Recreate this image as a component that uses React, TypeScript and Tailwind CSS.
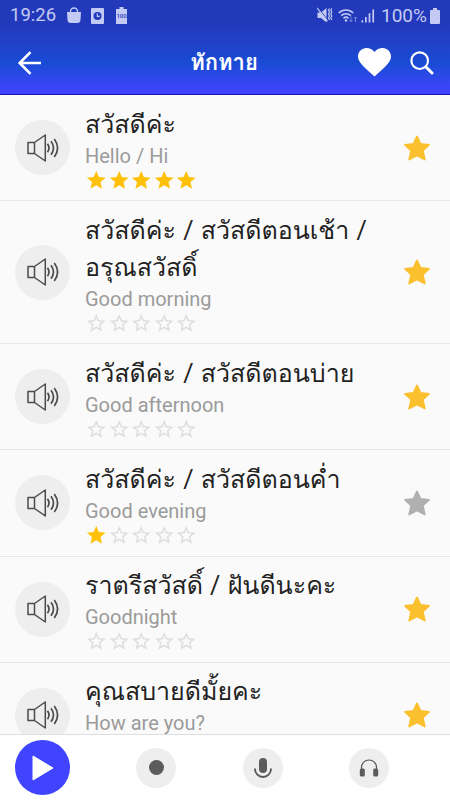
import React from "react";

type Phrase = {
  thai: string[];
  english: string;
  rating: number;
  favorite: boolean;
};

const phrases: Phrase[] = [
  { thai: ["สวัสดีค่ะ"], english: "Hello / Hi", rating: 5, favorite: true },
  {
    thai: ["สวัสดีค่ะ / สวัสดีตอนเช้า /", "อรุณสวัสดิ์"],
    english: "Good morning",
    rating: 0,
    favorite: true,
  },
  {
    thai: ["สวัสดีค่ะ / สวัสดีตอนบ่าย"],
    english: "Good afternoon",
    rating: 0,
    favorite: true,
  },
  {
    thai: ["สวัสดีค่ะ / สวัสดีตอนค่ำ"],
    english: "Good evening",
    rating: 1,
    favorite: false,
  },
  {
    thai: ["ราตรีสวัสดิ์ / ฝันดีนะคะ"],
    english: "Goodnight",
    rating: 0,
    favorite: true,
  },
  {
    thai: ["คุณสบายดีมั้ยคะ"],
    english: "How are you?",
    rating: 0,
    favorite: true,
  },
];

const StatusBar: React.FC = () => (
  <div className="flex h-[31px] items-center justify-between pl-[10px] pr-[10px] text-[#c3caf3]">
    <div className="flex items-center">
      <span className="w-[57px] text-[18.5px] leading-[31px]">19:26</span>
      <svg width="14" height="17" viewBox="0 0 14 17" fill="currentColor">
        <path d="M0 5h14l-.5 8a3.200 3.200 0 0 1-3.200 3H3.700a3.200 3.200 0 0 1-3.200-3z" />
        <path
          d="M3.500 8V4.500a3.500 3.500 0 0 1 7 0V8"
          fill="none"
          stroke="currentColor"
          strokeWidth="1.400"
        />
      </svg>
      <svg className="ml-[10px]" width="13" height="16" viewBox="0 0 13 16">
        <rect width="13" height="16" rx="1" fill="currentColor" />
        <circle cx="6.500" cy="8" r="4" fill="#2339bd" />
        <path d="M6.300 5.500V8.300h2.500" fill="none" stroke="currentColor" strokeWidth="1.200" />
      </svg>
      <svg className="ml-[12px]" width="11" height="17" viewBox="0 0 11 17">
        <path d="M3.500 0h4v2H11v15H0V2h3.500z" fill="currentColor" />
        <text x="5.500" y="11" fontSize="6" fontWeight="500" textAnchor="middle" fill="#2339bd">
          100
        </text>
      </svg>
    </div>
    <div className="flex items-center">
      <svg width="16" height="17" viewBox="0 0 16 17" fill="none" stroke="currentColor">
        <path d="M.5 5.500h3.500L9.500 1v14.500L4 11H.5z" fill="currentColor" stroke="none" />
        <path d="M1 .4l10 13" stroke="#2339bd" strokeWidth="1" />
        <path d="M0 .8l10.500 13.400" strokeWidth="1.100" />
        <path d="M12.500 1.500l-1 1.500 1 2-1 2 1 2-1 2 1 2M14.800 1.500l-1 1.500 1 2-1 2 1 2-1 2 1 2" strokeWidth="1.200" />
      </svg>
      <svg className="ml-[5px]" width="20" height="16" viewBox="0 0 20 16" fill="none" stroke="currentColor" strokeWidth="1.600">
        <path d="M.8 5a10.300 10.300 0 0 1 14.400 0M3.200 7.700a7 7 0 0 1 9.600 0M5.500 10.300a3.700 3.700 0 0 1 5 0" />
        <circle cx="8" cy="12.500" r="1.200" fill="currentColor" stroke="none" />
        <path d="M13 8.500v5M11.500 12l1.500 1.600 1.500-1.600M17.500 14V9M16 10.500L17.500 9l1.500 1.500" strokeWidth="1" opacity=".5" />
      </svg>
      <svg className="ml-[3px]" width="14" height="15" viewBox="0 0 15 15" fill="currentColor">
        <path d="M.5 12.500h1.800V15H.5zM4.300 9h1.800v6H4.300zM8.200 5H10v10H8.200zM12.200 1H14v14h-1.800z" />
      </svg>
      <span className="ml-[6px] w-[49px] text-[19px] leading-[31px]">100%</span>
      <svg width="10" height="16" viewBox="0 0 10 16" fill="currentColor">
        <path d="M3 0h4v2h2a1 1 0 0 1 1 1v12a1 1 0 0 1-1 1H1a1 1 0 0 1-1-1V3a1 1 0 0 1 1-1h2z" />
      </svg>
    </div>
  </div>
);

const SpeakerIcon: React.FC = () => (
  <svg
    width="32"
    height="28"
    viewBox="0 0 32 28"
    fill="none"
    stroke="#4b4b4b"
    strokeWidth="1.500"
    strokeLinejoin="round"
  >
    <path d="M1 8.500h6.500v11H1zM7.500 8.500L18.300 1v26L7.500 19.500" />
    <path d="M20.500 9.700q3 4.300 0 8.600M24 7.300q5 6.700 0 13.400M27.300 5q6.600 9 0 18" strokeWidth="1.700" />
  </svg>
);

const RatingStar: React.FC<{ filled: boolean }> = ({ filled }) => (
  <svg width="22.500" height="22.500" viewBox="0 0 24 24" fill={filled ? "#ffc107" : "#dedede"}>
    {filled ? (
      <path d="M12 17.270L18.180 21l-1.640-7.030L22 9.240l-7.190-.61L12 2 9.190 8.630 2 9.240l5.460 4.730L5.820 21z" />
    ) : (
      <path d="M22 9.240l-7.190-.62L12 2 9.190 8.630 2 9.240l5.460 4.730L5.820 21 12 17.270 18.180 21l-1.630-7.030L22 9.240zM12 15.400l-3.760 2.270 1-4.280-3.320-2.880 4.380-.38L12 6.100l1.710 4.040 4.380.38-3.320 2.880 1 4.280L12 15.400z" />
    )}
  </svg>
);

const FavoriteStar: React.FC<{ active: boolean }> = ({ active }) => (
  <svg
    width="28"
    height="28"
    viewBox="0 0 28 28"
    fill={active ? "#fbc02d" : "#b0b0b0"}
    stroke={active ? "#fbc02d" : "#b0b0b0"}
    strokeWidth="1.800"
    strokeLinejoin="round"
  >
    <path d="M14 2.500L17.500 10l8.500.8-6.200 5.900 2 8.800L14 21.500l-7.800 4 2-8.800L2 10.800l8.500-.8z" />
  </svg>
);

const PhraseRow: React.FC<{ phrase: Phrase }> = ({ phrase }) => (
  <div className="flex shrink-0 items-center border-b border-[#e6e6e6] pl-[15px] pr-[19px]">
    <button className="flex h-[55px] w-[55px] shrink-0 items-center justify-center rounded-full bg-[#eeeeee]">
      <SpeakerIcon />
    </button>
    <div className="ml-[15px] flex-1 pb-[8.65px] pt-[10.5px]">
      <div className="whitespace-nowrap font-[Roboto,Loma,'Noto_Sans_Thai',sans-serif] text-[25px] leading-[37px] text-[#222222] [word-spacing:1px]">
        {phrase.thai.map((line) => (
          <p key={line} className="h-[37px]">
            {line}
          </p>
        ))}
      </div>
      <p className="text-[20px] leading-[26px] text-[#9b9b9b]">{phrase.english}</p>
      <div className="flex h-[23px]">
        {[1, 2, 3, 4, 5].map((n) => (
          <RatingStar key={n} filled={n <= phrase.rating} />
        ))}
      </div>
    </div>
    <FavoriteStar active={phrase.favorite} />
  </div>
);

const PlayerBar: React.FC = () => (
  <div className="flex h-[66px] shrink-0 items-center border-t border-[#dedede] bg-white pl-[15px]">
    <button className="flex h-[55px] w-[55px] items-center justify-center rounded-full bg-[#4044ff]">
      <svg width="22" height="26" viewBox="0 0 22 26" fill="#fff" stroke="#fff" strokeLinejoin="round">
        <path d="M1 1v24l20-12z" />
      </svg>
    </button>
    <button className="ml-[66px] flex h-10 w-10 items-center justify-center rounded-full bg-[#eeeeee]">
      <span className="h-[15px] w-[15px] rounded-full bg-[#5c5c5c]" />
    </button>
    <button className="ml-[67px] flex h-10 w-10 items-center justify-center rounded-full bg-[#eeeeee]">
      <svg width="18" height="20" viewBox="0 0 18 20" fill="none" stroke="#555">
        <rect x="5" y="0" width="8" height="15" rx="4" fill="#5c5c5c" stroke="none" />
        <path d="M1 10.500v.5a8 8 0 0 0 16 0v-.5" strokeWidth="1.800" />
      </svg>
    </button>
    <button className="ml-[66px] flex h-10 w-10 items-center justify-center rounded-full bg-[#eeeeee]">
      <svg width="20" height="18" viewBox="0 0 20 18" fill="#5c5c5c">
        <path d="M2.500 11V8.500a7.500 7.500 0 0 1 15 0V11" fill="none" stroke="#555" strokeWidth="1.200" />
        <rect x=".8" y="9.500" width="5" height="8" rx="1.500" />
        <rect x="14.200" y="9.500" width="5" height="8" rx="1.500" />
      </svg>
    </button>
  </div>
);

const App: React.FC = () => {
  return (
    <div className="flex h-[800px] w-[450px] flex-col overflow-hidden bg-[#fafafa] font-[Roboto,'Noto_Sans',sans-serif]">
      <header className="h-[95px] shrink-0 border-b border-[#1a12b0] bg-linear-to-b from-[#2339bb] from-25% via-[#194bd6] via-68% to-[#4043ff] to-98%">
        <StatusBar />
        <div className="flex h-[63px] items-center justify-between pl-[18px] pr-[16px] text-white">
          <svg width="24" height="24" viewBox="0 0 24 24" fill="none" stroke="currentColor" strokeWidth="2.600">
            <path d="M23 12H2M12.500 1.200L1.700 12l10.800 10.800" />
          </svg>
          <h1 className="ml-[48px] font-[Roboto,Loma,'Noto_Sans_Thai',sans-serif] text-[22px] font-bold leading-[30px]">
            ทักทาย
          </h1>
          <div className="flex items-center">
            <svg width="33" height="29" viewBox="0 0 33 29" fill="currentColor">
              <path d="M16.500 28.500L14 26.300C5.500 18.700 0 14 0 8.500 0 3.800 3.700 0 8.500 0c3 0 6 1.400 8 4 2-2.600 5-4 8-4C29.300 0 33 3.800 33 8.500c0 5.500-5.500 10.200-14 17.800z" />
            </svg>
            <svg className="ml-[19px]" width="24" height="24" viewBox="0 0 24 24" fill="none" stroke="currentColor" strokeLinecap="round">
              <circle cx="9.700" cy="9.700" r="8.300" strokeWidth="2.200" />
              <path d="M16 16l6 6" strokeWidth="3" />
            </svg>
          </div>
        </div>
      </header>
      <main className="flex min-h-0 flex-1 flex-col overflow-hidden">
        {phrases.map((phrase) => (
          <PhraseRow key={phrase.english} phrase={phrase} />
        ))}
      </main>
      <PlayerBar />
    </div>
  );
};

export default App;
